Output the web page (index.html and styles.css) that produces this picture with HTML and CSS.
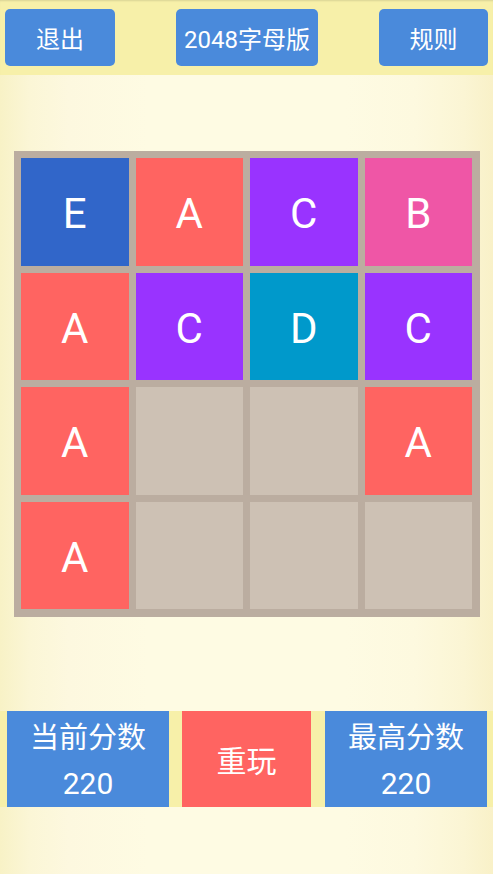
FILE: index.html
```html
<!DOCTYPE html>
<html lang="zh">
<head>
<meta charset="utf-8">
<link rel="stylesheet" href="styles.css">
</head>
<body>
<div class="topbar">
  <div class="btn btn-exit">退出</div>
  <div class="btn btn-title">2048字母版</div>
  <div class="btn btn-rule">规则</div>
</div>
<div class="main">
  <div class="board">
    <div class="tile t-e">E</div>
    <div class="tile t-a">A</div>
    <div class="tile t-c">C</div>
    <div class="tile t-b">B</div>
    <div class="tile t-a">A</div>
    <div class="tile t-c">C</div>
    <div class="tile t-d">D</div>
    <div class="tile t-c">C</div>
    <div class="tile t-a">A</div>
    <div class="tile"></div>
    <div class="tile"></div>
    <div class="tile t-a">A</div>
    <div class="tile t-a">A</div>
    <div class="tile"></div>
    <div class="tile"></div>
    <div class="tile"></div>
  </div>
</div>
<div class="scorebar">
  <div class="score">
    <div class="score-label">当前分数</div>
    <div class="score-num">220</div>
  </div>
  <div class="restart">重玩</div>
  <div class="score">
    <div class="score-label">最高分数</div>
    <div class="score-num">220</div>
  </div>
</div>
</body>
</html>
```
FILE: styles.css
```css
html, body {
  margin: 0;
  padding: 0;
}
body {
  width: 493px;
  height: 874px;
  overflow: hidden;
  font-family: "Roboto", "Noto Sans CJK SC", sans-serif;
  color: #ffffff;
  background: linear-gradient(to right, #f8f2c6 0%, #fbf6d6 6%, #fdf8df 14%, #fefbe3 30%, #fefbe3 70%, #fdf9df 84%, #fbf5d4 94%, #f9f1c8 100%);
}
.topbar {
  height: 75px;
  background: #f7f0a9;
  display: flex;
  align-items: center;
  justify-content: space-between;
  padding: 0 5px 0 5px;
  box-sizing: border-box;
  box-shadow: inset 0 2px 2px -1px rgba(0,0,0,0.12);
}
.btn {
  height: 57px;
  background: #4a8adb;
  border-radius: 5px;
  display: flex;
  align-items: center;
  justify-content: center;
  font-size: 24px;
}
.btn-exit { width: 110px; }
.btn-title { width: 142px; }
.btn-rule { width: 109px; }
.main {
  padding: 76px 0 0 14px;
  height: 560px;
  box-sizing: border-box;
}
.board {
  width: 466px;
  height: 466px;
  box-sizing: border-box;
  background: #bbada0;
  padding: 7px 8px 8px 7px;
  display: grid;
  grid-template-columns: repeat(4, 1fr);
  grid-template-rows: repeat(4, 1fr);
  gap: 7px;
}
.tile {
  background: #cdc1b4;
  display: flex;
  align-items: center;
  justify-content: center;
  font-size: 42px;
  padding-top: 4px;
  box-sizing: border-box;
  font-family: "Roboto", sans-serif;
}
.t-a { background: #ff6461; }
.t-b { background: #ef56a6; }
.t-c { background: #9933ff; }
.t-d { background: #0099cb; }
.t-e { background: #3166c9; }
.scorebar {
  margin-top: 76px;
  height: 96px;
  background: #f7f0a9;
  display: flex;
  padding: 0 6px 0 7px;
}
.score {
  width: 162px;
  background: #4a8adb;
  display: flex;
  flex-direction: column;
}
.score-label, .score-num {
  height: 48px;
  display: flex;
  align-items: center;
  justify-content: center;
  font-size: 29px;
}
.score-num {
  font-size: 30px;
}
.restart {
  width: 129px;
  margin: 0 14px 0 13px;
  background: #ff6461;
  display: flex;
  align-items: center;
  justify-content: center;
  font-size: 30px;
}
```
